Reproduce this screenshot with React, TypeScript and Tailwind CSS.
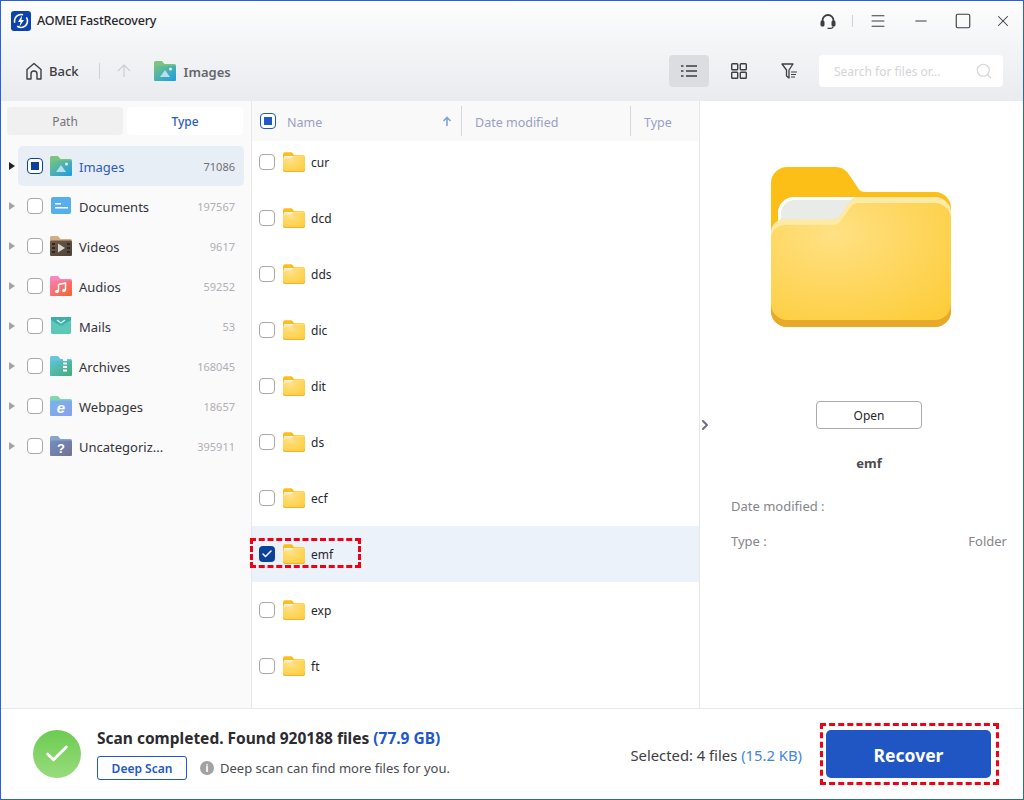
import { useId, type ReactNode } from 'react'
import { Check, ChevronRight, Menu, Minus, Search, Square, X } from 'lucide-react'

const categories = [
  { name: 'Images', count: '71086', icon: 'images' },
  { name: 'Documents', count: '197567', icon: 'documents' },
  { name: 'Videos', count: '9617', icon: 'videos' },
  { name: 'Audios', count: '59252', icon: 'audios' },
  { name: 'Mails', count: '53', icon: 'mails' },
  { name: 'Archives', count: '168045', icon: 'archives' },
  { name: 'Webpages', count: '18657', icon: 'webpages' },
  { name: 'Uncategoriz...', count: '395911', icon: 'other' },
]

const folders = ['cur', 'dcd', 'dds', 'dic', 'dit', 'ds', 'ecf', 'emf', 'exp', 'ft']

function FolderArt({ className }: { className?: string }) {
  const id = useId()
  return (
    <svg viewBox="0 0 180 160" className={className}>
      <defs>
        <radialGradient id={id} cx="0.35" cy="0.3" r="0.95">
          <stop offset="0" stopColor="#ffe184" />
          <stop offset="1" stopColor="#fdcb35" />
        </radialGradient>
      </defs>
      <path d="M0 16a16 16 0 0 1 16-16h48c8 0 12 4 15 9l8 12c2 3 4 4 8 4h69a16 16 0 0 1 16 16v103a16 16 0 0 1-16 16H16a16 16 0 0 1-16-16Z" fill="#fbbf18" />
      <path d="M0 100h180v44a16 16 0 0 1-16 16H16a16 16 0 0 1-16-16Z" fill="#e6aa28" />
      <path d="M7 46a16 16 0 0 1 16-16h70v40H7Z" fill="#e9ebe8" />
      <path d="M7 46a16 16 0 0 1 16-16h70v3H24a14 14 0 0 0-14 14v12H7Z" fill="#ffffff" />
      <path d="M0 66a14 14 0 0 1 14-14h46c6 0 9-2 11-6l8-11c2-4 5-5 11-5h74a16 16 0 0 1 16 16v91a16 16 0 0 1-16 16H16a16 16 0 0 1-16-16Z" fill={`url(#${id})`} />
      <path d="M0 66a14 14 0 0 1 14-14h46c6 0 9-2 11-6l8-11c2-4 5-5 11-5h74a16 16 0 0 1 16 16v6a16 16 0 0 0-16-16H90c-6 0-9 1-11 5l-8 11c-2 4-5 6-11 6H14A14 14 0 0 0 0 72Z" fill="#fdeaa6" />
    </svg>
  )
}

function TypeFolder({ from, to, tab, children }: { from: string; to: string; tab: string; children?: ReactNode }) {
  const id = useId()
  return (
    <svg viewBox="0 0 22 20" className="h-5 w-[22px] shrink-0">
      <defs>
        <linearGradient id={id} x1="0" y1="0" x2="1" y2="1">
          <stop offset="0" stopColor={from} />
          <stop offset="1" stopColor={to} />
        </linearGradient>
      </defs>
      <path d="M0 1.5A1.5 1.5 0 0 1 1.5 0H7c1 0 1.500.6 2 1.200L10.500 3H20.500A1.500 1.500 0 0 1 22 4.500V18.500A1.500 1.500 0 0 1 20.500 20H1.500A1.500 1.500 0 0 1 0 18.500Z" fill={tab} />
      <path d="M0 6A1.500 1.500 0 0 1 1.500 4.500H20.500A1.500 1.500 0 0 1 22 6V18.500A1.500 1.500 0 0 1 20.500 20H1.500A1.500 1.500 0 0 1 0 18.500Z" fill={`url(#${id})`} />
      {children}
    </svg>
  )
}

function CategoryIcon({ kind }: { kind: string }) {
  if (kind === 'images') {
    return (
      <TypeFolder from="#76c47e" to="#1b9ce6" tab="#7cc47c">
        <path d="M6 16l5-7 5 7Z" fill="#bcdcf0" />
        <circle cx="16.500" cy="8" r="1.500" fill="#d8f0f0" />
      </TypeFolder>
    )
  }
  if (kind === 'documents') {
    return (
      <svg viewBox="0 0 22 20" className="h-5 w-[22px] shrink-0">
        <rect x="1" y="1" width="20" height="17" rx="2" fill="#56aeea" />
        <rect x="5" y="7" width="6" height="1.500" fill="#ffffff" />
        <rect x="5" y="11" width="13" height="1.500" fill="#ffffff" />
      </svg>
    )
  }
  if (kind === 'videos') {
    return (
      <TypeFolder from="#6d5a4a" to="#4f4238" tab="#d3ab84">
        <path d="M8 7.500l7 4.500-7 4.500Z" fill="#d9d4cd" />
        <rect x="2" y="7" width="3" height="2" fill="#2e2823" />
        <rect x="2" y="11" width="3" height="2" fill="#2e2823" />
        <rect x="2" y="15" width="3" height="2" fill="#2e2823" />
        <rect x="17" y="7" width="3" height="2" fill="#2e2823" />
        <rect x="17" y="11" width="3" height="2" fill="#2e2823" />
        <rect x="17" y="15" width="3" height="2" fill="#2e2823" />
      </TypeFolder>
    )
  }
  if (kind === 'audios') {
    return (
      <TypeFolder from="#f77fb0" to="#f5622c" tab="#f786bd">
        <path d="M8.500 8.500l7-1.500v7.500" fill="none" stroke="#ffffff" strokeWidth="1.500" />
        <path d="M8.500 8.500v7" fill="none" stroke="#ffffff" strokeWidth="1.500" />
        <circle cx="7" cy="15.500" r="1.800" fill="#ffffff" />
        <circle cx="14" cy="14.500" r="1.800" fill="#ffffff" />
      </TypeFolder>
    )
  }
  if (kind === 'mails') {
    return (
      <svg viewBox="0 0 22 20" className="h-5 w-[22px] shrink-0">
        <rect x="1" y="1" width="20" height="17" rx="1.500" fill="#5cc8b8" />
        <path d="M1 1h20v3l-10 6-10-6Z" fill="#3eaea6" />
        <path d="M7 4l4 3 4-3" fill="none" stroke="#e6f7f4" strokeWidth="1.200" />
      </svg>
    )
  }
  if (kind === 'archives') {
    return (
      <TypeFolder from="#5cc5da" to="#46ab72" tab="#66c8e0">
        <path d="M13 3h4v2h-2v1.500h2v2h-2v1.500h2v2h-2v1.500h2v2h-4v-2h2v-1.500h-2v-2h2V8.500h-2v-2h2V5h-2Z" fill="#ffffff" />
      </TypeFolder>
    )
  }
  if (kind === 'webpages') {
    return (
      <TypeFolder from="#76b4ec" to="#8a9fec" tab="#7fd8b0">
        <text x="11" y="17" textAnchor="middle" fontFamily="Liberation Sans, sans-serif" fontSize="15" fontStyle="italic" fontWeight="700" fill="#ffffff">e</text>
      </TypeFolder>
    )
  }
  return (
    <TypeFolder from="#6d8fc4" to="#77718f" tab="#8ba4cc">
      <text x="11" y="17" textAnchor="middle" fontFamily="Liberation Sans, sans-serif" fontSize="13" fontWeight="700" fill="#ffffff">?</text>
    </TypeFolder>
  )
}

function Box({ state = 'off', tone = 'navy' }: { state?: 'off' | 'part' | 'on'; tone?: 'navy' | 'blue' }) {
  if (state === 'on') {
    return (
      <span className="flex h-4 w-4 shrink-0 items-center justify-center rounded-[4px] bg-[#0b4199]">
        <Check className="h-3 w-3 text-white" strokeWidth={3} />
      </span>
    )
  }
  if (state === 'part') {
    return (
      <span className={`flex h-4 w-4 shrink-0 items-center justify-center rounded-[4px] border ${tone === 'blue' ? 'border-[#2058c8]' : 'border-[#0b4199]'} bg-white`}>
        <span className={`h-2 w-2 ${tone === 'blue' ? 'bg-[#2058c8]' : 'bg-[#0b4199]'}`} />
      </span>
    )
  }
  return <span className="h-4 w-4 shrink-0 rounded-[4px] border border-[#a8a8a8] bg-white" />
}

function TitleBar() {
  return (
    <div className="flex h-10 items-center pl-[10px] pr-[11px]">
      <svg viewBox="0 0 20 20" className="h-5 w-5">
        <rect width="20" height="20" rx="3" fill="#0c43b0" />
        <circle cx="10" cy="10" r="6.500" fill="none" stroke="#ffffff" strokeWidth="1.600" strokeDasharray="14 4" />
        <path d="M11 4.500 7 11h2.500L8.500 15.500 13 9h-2.500Z" fill="#ffffff" />
      </svg>
      <span className="ml-[6px] text-[12.500px] font-medium tracking-[-0.2px] text-[#26262c]">AOMEI FastRecovery</span>
      <div className="ml-auto flex items-center">
        <svg viewBox="0 0 16 16" className="h-4 w-4 text-[#3d3d42]">
          <path d="M2.500 9V7.500a5.500 5.500 0 0 1 11 0V9" fill="none" stroke="currentColor" strokeWidth="1.800" />
          <rect x="0.500" y="7.500" width="4" height="6" rx="1.500" fill="currentColor" />
          <rect x="11.500" y="7.500" width="4" height="6" rx="1.500" fill="currentColor" />
          <path d="M13 13.500c0 1-1 1.800-2.500 1.800H7.500" fill="none" stroke="currentColor" strokeWidth="1.200" />
        </svg>
        <span className="ml-4 h-3 w-px bg-[#d0d1d4]" />
        <Menu className="ml-4 h-[18px] w-[18px] text-[#3d3d42]" strokeWidth={1.400} />
        <Minus className="ml-[25px] h-[18px] w-[18px] text-[#3d3d42]" strokeWidth={1.400} />
        <Square className="ml-[24px] h-[18px] w-[18px] text-[#3d3d42]" strokeWidth={1.500} />
        <X className="ml-[22px] h-[18px] w-[18px] text-[#3d3d42]" strokeWidth={1.400} />
      </div>
    </div>
  )
}

function Toolbar() {
  return (
    <div className="flex h-[60px] items-center pl-6 pr-5">
      <svg viewBox="0 0 18 18" className="h-[18px] w-[18px] text-[#3d3d42]">
        <path d="M2 17V7.500L9 1.500l7 6V17h-4v-5a3 3 0 0 0-6 0v5Z" fill="none" stroke="currentColor" strokeWidth="1.400" strokeLinejoin="round" />
      </svg>
      <span className="ml-[6px] pt-[2px] text-[13px] font-medium text-[#3d3d42]">Back</span>
      <span className="ml-5 h-4 w-px bg-[#d0d1d4]" />
      <svg viewBox="0 0 14 14" className="ml-[17px] h-[14px] w-[14px] text-[#cfd0d3]">
        <path d="M7 13V1M1 7l6-6 6 6" fill="none" stroke="currentColor" strokeWidth="1.300" />
      </svg>
      <span className="ml-[23px]">
        <CategoryIcon kind="images" />
      </span>
      <span className="ml-[8px] pt-[3px] text-[13px] font-semibold text-[#66666c]">Images</span>
      <div className="ml-auto flex items-center">
        <span className="flex h-8 w-10 items-center justify-center rounded-[4px] bg-[#dcdde0]">
          <svg viewBox="0 0 16 12" className="h-3 w-4 text-[#3d3d42]">
            <path d="M0 1h2.500M0 6h2.500M0 11h2.500M5 1h11M5 6h11M5 11h11" stroke="currentColor" strokeWidth="1.500" />
          </svg>
        </span>
        <svg viewBox="0 0 16 16" className="ml-[22px] h-4 w-4 text-[#3d3d42]">
          <rect x="0.700" y="0.700" width="6" height="6" rx="0.800" fill="none" stroke="currentColor" strokeWidth="1.400" />
          <rect x="9.300" y="0.700" width="6" height="6" rx="0.800" fill="none" stroke="currentColor" strokeWidth="1.400" />
          <rect x="0.700" y="9.300" width="6" height="6" rx="0.800" fill="none" stroke="currentColor" strokeWidth="1.400" />
          <rect x="9.300" y="9.300" width="6" height="6" rx="0.800" fill="none" stroke="currentColor" strokeWidth="1.400" />
        </svg>
        <svg viewBox="0 0 16 16" className="ml-[34px] h-4 w-4 text-[#3d3d42]">
          <path d="M1 1h11L8 7v8L5.500 13V7Z" fill="none" stroke="currentColor" strokeWidth="1.300" strokeLinejoin="round" />
          <path d="M10 9h6M10 11.500h5M10 14h4" stroke="currentColor" strokeWidth="1.100" />
        </svg>
        <div className="ml-[22px] flex h-8 w-[184px] items-center justify-between rounded-[4px] bg-white pl-[15px] pr-[10px]">
          <span className="pt-[2px] text-[12px] text-[#d4d4d6]">Search for files or...</span>
          <Search className="h-[18px] w-[18px] text-[#d4d4d6]" strokeWidth={1.500} />
        </div>
      </div>
    </div>
  )
}

function Sidebar() {
  return (
    <aside className="flex w-[251px] shrink-0 flex-col border-r border-[#e6e8ee] bg-[#fafafa]">
      <div className="flex gap-1 px-[6px] pt-[6px]">
        <div className="flex h-7 w-[116px] items-center justify-center rounded-[4px] bg-[#f0f0f0] pt-[2px] text-[12px] text-[#77727a]">Path</div>
        <div className="flex h-7 w-[116px] items-center justify-center rounded-[4px] bg-white pt-[2px] text-[12px] font-medium text-[#2c5cc0]">Type</div>
      </div>
      <div className="mt-[11px] flex flex-col">
        {categories.map((c, i) => (
          <div key={c.name} className="flex h-10 items-center">
            <span className={`ml-2 mr-[3px] h-0 w-0 shrink-0 border-y-[4px] border-l-[6px] border-y-transparent ${i === 0 ? 'border-l-[#222222]' : 'border-l-[#a3a3a3]'}`} />
            <div className={`mr-[7px] flex h-10 flex-1 items-center rounded-[5px] pl-[9px] pr-[9px] ${i === 0 ? 'bg-[#e8eef6]' : ''}`}>
              <Box state={i === 0 ? 'part' : 'off'} />
              <span className="ml-[7px]">
                <CategoryIcon kind={c.icon} />
              </span>
              <span className={`ml-[7px] pt-[4px] text-[13px] ${i === 0 ? 'text-[#2c5cc0]' : 'text-[#33333a]'}`}>{c.name}</span>
              <span className={`ml-auto pt-[3px] text-[11px] ${i === 0 ? 'text-[#6e6e74]' : 'text-[#b3aeb6]'}`}>{c.count}</span>
            </div>
          </div>
        ))}
      </div>
    </aside>
  )
}

function FileList() {
  return (
    <section className="flex w-[448px] shrink-0 flex-col border-r border-[#e6e8ee] bg-white">
      <div className="relative z-10 flex h-10 shrink-0 items-center bg-[#f9f9fa] text-[12.500px] text-[#9a9fc2]">
        <div className="flex h-[30px] w-[210px] items-center border-r border-[#d6d8de] pl-2 pr-[9px]">
          <Box state="part" tone="blue" />
          <span className="ml-[11px] pt-[4px]">Name</span>
          <svg viewBox="0 0 10 10" className="ml-auto h-[10px] w-[10px] text-[#7ea6d8]">
            <path d="M5 10V2M1.500 5 5 1.500 8.500 5" fill="none" stroke="currentColor" strokeWidth="1.600" />
          </svg>
        </div>
        <div className="flex h-[30px] w-[169px] items-center border-r border-[#d6d8de] pl-[13px] pt-[4px]">Date modified</div>
        <div className="pl-[13px] pt-[4px]">Type</div>
      </div>
      <div className="min-h-0 flex-1 overflow-hidden">
        <div className="-mt-[7px]">
          {folders.map((name) => (
            <div key={name} className={`flex h-14 items-center pl-[7px] ${name === 'emf' ? 'bg-[#ebf2fa]' : ''}`}>
              <Box state={name === 'emf' ? 'on' : 'off'} />
              <FolderArt className="ml-2 h-5 w-[22px]" />
              <span className="ml-[6px] pt-[2px] text-[12px] text-[#26262c]">{name}</span>
            </div>
          ))}
        </div>
      </div>
    </section>
  )
}

function Preview() {
  return (
    <aside className="relative flex flex-1 flex-col items-center bg-white">
      <ChevronRight className="absolute left-[-3px] top-[316px] h-4 w-4 text-[#6d6e80]" strokeWidth={3} />
      <FolderArt className="mr-[2px] mt-[66px] h-40 w-[180px]" />
      <div className="ml-[15px] mt-[74px] flex h-7 w-[106px] items-center justify-center rounded-[4px] border border-[#a9a9b0] pt-[1px] text-[12px] text-[#26262c]">Open</div>
      <div className="ml-[15px] mt-[25px] text-[13px] font-bold text-[#4a4a50]">emf</div>
      <div className="mt-[23px] w-full pl-[31px] pr-4 text-[13px] text-[#85858b]">
        <div>Date modified :</div>
        <div className="mt-4 flex justify-between">
          <span>Type :</span>
          <span>Folder</span>
        </div>
      </div>
    </aside>
  )
}

function Footer() {
  return (
    <footer className="flex h-[91px] shrink-0 items-center border-t border-[#e6e8ee] bg-white pl-8 pr-8">
      <span className="flex h-12 w-12 shrink-0 items-center justify-center rounded-full bg-gradient-to-b from-[#6ccb50] to-[#98dc7c]">
        <Check className="h-7 w-7 text-white" strokeWidth={2.500} />
      </span>
      <div className="ml-4">
        <div className="text-[15.500px] font-bold leading-[21px] text-[#2b2b30]">
          Scan completed. Found 920188 files <span className="text-[#2058c8]">(77.9 GB)</span>
        </div>
        <div className="mt-[7px] flex items-center">
          <span className="flex h-6 w-[90px] items-center justify-center rounded-[3px] border border-[#2058c8] pt-[1px] text-[12px] font-semibold text-[#2058c8]">Deep Scan</span>
          <span className="ml-[13px] flex h-[14px] w-[14px] items-center justify-center rounded-full bg-[#a2a2a2] text-[10px] font-bold text-white">i</span>
          <span className="ml-[6px] pt-[2px] text-[13px] text-[#4a4a50]">Deep scan can find more files for you.</span>
        </div>
      </div>
      <span className="ml-auto pt-[2px] text-[14.800px] text-[#3d3d42]">
        Selected: 4 files <span className="text-[#3f86d8]">(15.2 KB)</span>
      </span>
      <div className="relative ml-[24px]">
        <span className="flex h-12 w-[165px] items-center justify-center rounded-[5px] bg-[#1f56c3] pt-[2px] text-[17.500px] font-bold text-white">Recover</span>
        <span className="absolute -left-[6px] -right-[8px] -top-[7px] -bottom-[7px] border-[3px] border-dashed border-[#f00014]" />
      </div>
    </footer>
  )
}

export default function App() {
  return (
    <div className="relative flex h-[800px] w-[1024px] flex-col overflow-hidden border border-[#2a5fe0] bg-white font-['Noto_Sans',sans-serif]">
      <header className="h-[100px] shrink-0 bg-gradient-to-b from-[#fdfdfd] to-[#e9ebef]">
        <TitleBar />
        <Toolbar />
      </header>
      <main className="flex min-h-0 flex-1">
        <Sidebar />
        <FileList />
        <Preview />
      </main>
      <Footer />
      <span className="absolute left-[249px] top-[537px] h-[30px] w-[111px] border-[3px] border-dashed border-[#f00014]" />
    </div>
  )
}
